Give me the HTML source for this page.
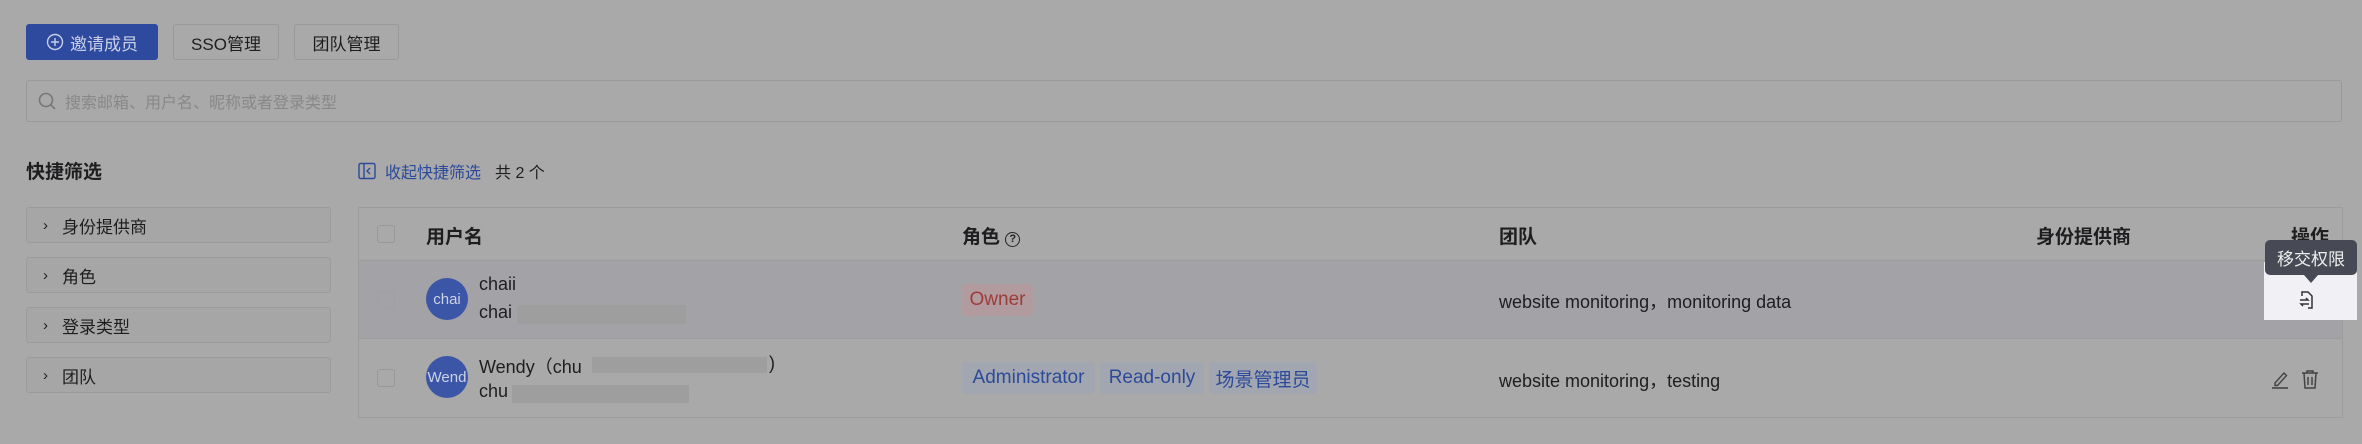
<!DOCTYPE html>
<html><head><meta charset="utf-8"><style>
*{box-sizing:border-box;margin:0;padding:0}
body{width:2362px;height:444px;background:#a9a9a9;font-family:"Liberation Sans","Noto Sans CJK SC",sans-serif;color:#1e1e20;position:relative;overflow:hidden;font-size:18px}
.a{position:absolute}
.btn{position:absolute;top:24px;height:36px;border:1px solid #999;border-radius:3px;display:flex;align-items:center;justify-content:center;font-size:17px;color:#1e1e20}
.flt{position:absolute;left:26px;width:305px;height:36px;border:1px solid #9c9c9c;border-radius:3px;background:#a6a6a6;font-size:17px;display:flex;align-items:center;padding-left:16px}
.flt span{margin-right:14px;font-size:15px}
.th{position:absolute;top:222px;font-weight:bold;font-size:19px}
.cb{position:absolute;left:377px;width:18px;height:18px;border:1px solid #989898;border-radius:3px}
.av{position:absolute;left:426px;width:42px;height:42px;border-radius:50%;background:#3c56a7;color:#ccd3e6;font-size:15px;display:flex;align-items:center;justify-content:center;overflow:hidden;white-space:nowrap}
.red{position:absolute;background:#9e9e9e}
.tag{position:absolute;height:32px;border-radius:4px;display:flex;align-items:center;justify-content:center;font-size:19px}
.b{background:#a2a6b0;color:#2c4a9a}
</style></head><body>
<div class="btn" style="left:26px;width:132px;background:#2d4a9f;border-color:#2d4a9f;color:#c9d0e6"><svg width="18" height="18" viewBox="0 0 18 18" style="margin-right:6px"><circle cx="9" cy="9" r="7.5" fill="none" stroke="#c9d0e6" stroke-width="1.4"/><path d="M9 5v8M5 9h8" stroke="#c9d0e6" stroke-width="1.4"/></svg>邀请成员</div>
<div class="btn" style="left:173px;width:106px">SSO管理</div>
<div class="btn" style="left:294px;width:105px">团队管理</div>
<div class="a" style="left:26px;top:80px;width:2316px;height:42px;border:1px solid #999;border-radius:3px;display:flex;align-items:center;padding-left:10px;color:#888;font-size:16px"><svg width="20" height="20" viewBox="0 0 20 20" style="margin-right:8px"><circle cx="9" cy="9" r="6.5" fill="none" stroke="#777" stroke-width="1.6"/><path d="M14 14l4 4" stroke="#777" stroke-width="1.6"/></svg>搜索邮箱、用户名、昵称或者登录类型</div>
<div class="a" style="left:26px;top:157px;font-size:19px;font-weight:bold">快捷筛选</div>
<div class="a" style="left:358px;top:159px;font-size:16px;color:#2c4a9a;display:flex;align-items:center"><svg width="18" height="18" viewBox="0 0 18 18" style="margin-right:9px"><rect x="1" y="1.5" width="16" height="15" rx="1.5" fill="none" stroke="#2c4a9a" stroke-width="1.4"/><path d="M6 2v14M12 6l-3 3 3 3" fill="none" stroke="#2c4a9a" stroke-width="1.4"/></svg>收起快捷筛选<span style="color:#1e1e20;margin-left:14px">共 2 个</span></div>
<div class="flt" style="top:207px"><span>›</span>身份提供商</div>
<div class="flt" style="top:257px"><span>›</span>角色</div>
<div class="flt" style="top:307px"><span>›</span>登录类型</div>
<div class="flt" style="top:357px"><span>›</span>团队</div>
<div class="a" style="left:358px;top:207px;width:1985px;height:211px;border:1px solid #9c9c9c"></div>
<div class="a" style="left:359px;top:260px;width:1983px;height:79px;background:#a3a3a7;border-top:1px solid #9c9c9c;border-bottom:1px solid #9c9c9c"></div>
<div class="cb" style="top:225px"></div>
<div class="th" style="left:426px">用户名</div>
<div class="th" style="left:962px">角色 <span style="display:inline-block;width:15px;height:15px;border:1.5px solid #222;border-radius:50%;font-size:11px;text-align:center;line-height:12px;vertical-align:1px">?</span></div>
<div class="th" style="left:1499px">团队</div>
<div class="th" style="left:2036px">身份提供商</div>
<div class="th" style="left:2291px">操作</div>
<div class="cb" style="top:291px;border-color:#a0a0a0"></div>
<div class="av" style="top:278px">chai</div>
<div class="a" style="left:479px;top:274px">chaii</div>
<div class="a" style="left:479px;top:302px">chai</div>
<div class="red" style="left:517px;top:305px;width:169px;height:19px"></div>
<div class="tag" style="left:962px;top:284px;width:71px;background:#b29b9e;color:#9e3b3b">Owner</div>
<div class="a" style="left:1499px;top:288px">website monitoring，monitoring data</div>
<div class="cb" style="top:369px"></div>
<div class="av" style="top:356px">Wend</div>
<div class="a" style="left:479px;top:353px">Wendy（chu</div>
<div class="red" style="left:592px;top:357px;width:175px;height:16px"></div>
<div class="a" style="left:769px;top:353px">)</div>
<div class="a" style="left:479px;top:381px">chu</div>
<div class="red" style="left:512px;top:385px;width:177px;height:18px"></div>
<div class="tag b" style="left:962px;top:362px;width:133px">Administrator</div>
<div class="tag b" style="left:1100px;top:362px;width:104px">Read-only</div>
<div class="tag b" style="left:1209px;top:362px;width:108px">场景管理员</div>
<div class="a" style="left:1499px;top:367px">website monitoring，testing</div>
<div class="a" style="left:2264px;top:262px;width:93px;height:58px;background:#f1f1f5"></div>
<svg class="a" style="left:2298px;top:290px" width="18" height="20" viewBox="0 0 18 20"><path d="M4 6V2h6l4 4v12h-4" fill="none" stroke="#333" stroke-width="1.5"/><path d="M2 10h8l-2-2M11 14H3l2 2" fill="none" stroke="#333" stroke-width="1.5"/></svg>
<div class="a" style="left:2265px;top:240px;width:92px;height:35px;background:#474a54;border-radius:5px;color:#eee;font-size:17px;display:flex;align-items:center;justify-content:center">移交权限</div>
<div class="a" style="left:2304px;top:275px;width:0;height:0;border-left:7px solid transparent;border-right:7px solid transparent;border-top:8px solid #474a54"></div>
<svg class="a" style="left:2271px;top:369px" width="20" height="20" viewBox="0 0 20 20"><path d="M4 14l9-10 2.5 2.5-9 10H4z" fill="none" stroke="#444" stroke-width="1.4"/><path d="M1 19h16" stroke="#444" stroke-width="1.6"/></svg>
<svg class="a" style="left:2300px;top:369px" width="20" height="20" viewBox="0 0 20 20"><path d="M2 4h16M7 4V2h6v2M4 4l1 15h10l1-15M8 8v8M12 8v8" fill="none" stroke="#444" stroke-width="1.5"/></svg>
</body></html>
